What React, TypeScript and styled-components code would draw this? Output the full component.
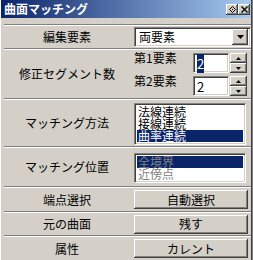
import React from 'react';
import styled, { createGlobalStyle } from 'styled-components';

const GlobalStyle = createGlobalStyle`
  html, body {
    margin: 0;
    padding: 0;
    background: #d4d0c8;
  }
  body {
    font-family: "Noto Sans CJK JP", "Noto Sans", sans-serif;
    font-size: 12px;
    color: #000;
  }
`;

const Window = styled.div`
  width: 253px;
  height: 260px;
  box-sizing: border-box;
  background: #d4d0c8;
  border-left: 1px solid #ffffff;
  border-right: 1px solid #808080;
  box-shadow: inset -1px 0 #404040;
  display: flex;
  flex-direction: column;
  overflow: hidden;
`;

const TitleBar = styled.div`
  height: 18px;
  margin-right: 1px;
  display: flex;
  align-items: center;
  padding: 0 1px 0 3px;
  background: linear-gradient(to right, #0a246a, #a6caf0);
  color: #fff;
  font-weight: bold;
  font-size: 12px;
  flex-shrink: 0;
`;

const TitleText = styled.span`
  flex: 1;
  line-height: 14px;
`;

const TitleButton = styled.div`
  width: 12px;
  height: 11px;
  box-sizing: border-box;
  background: #d4d0c8;
  box-shadow: inset -1px -1px #404040, inset 1px 1px #ffffff,
    inset -2px -2px #808080;
  display: flex;
  align-items: center;
  justify-content: center;
`;

const Body = styled.div`
  padding: 6px 1px 0 3px;
  display: flex;
  flex-direction: column;
`;

const Separator = styled.div`
  height: 2px;
  box-sizing: border-box;
  border-top: 1px solid #808080;
  border-bottom: 1px solid #ffffff;
`;

const Row = styled.div<{ $h: number; $align?: string }>`
  height: ${(p) => p.$h}px;
  display: grid;
  grid-template-columns: 126px 1fr;
  align-items: ${(p) => p.$align || 'center'};
`;

const Label = styled.div`
  text-align: center;
  align-self: center;
  line-height: 14px;
`;

const Control = styled.div`
  padding: 0 0 0 4px;
`;

const sunken = `
  border: 1px solid;
  border-color: #808080 #ffffff #ffffff #808080;
  box-shadow: inset 1px 1px #404040, inset -1px -1px #d4d0c8;
  background: #fff;
  box-sizing: border-box;
`;

const raised = `
  background: #d4d0c8;
  box-sizing: border-box;
  box-shadow: inset -1px -1px #404040, inset 1px 1px #ffffff,
    inset -2px -2px #808080;
`;

const Combo = styled.div`
  ${sunken};
  height: 20px;
  margin-top: 1px;
  display: flex;
  align-items: center;
  padding: 2px 2px 2px 4px;
`;

const ComboText = styled.span`
  flex: 1;
  line-height: 14px;
`;

const DropButton = styled.div`
  ${raised};
  width: 16px;
  height: 16px;
  display: flex;
  align-items: center;
  justify-content: center;
`;

const SpinGroup = styled.div`
  display: flex;
  flex-direction: column;
  gap: 3px;
  padding: 3px 0 0 4px;
`;

const SpinLine = styled.div`
  display: flex;
  height: 20px;
`;

const SpinLabel = styled.span`
  width: 59px;
  line-height: 12px;
  margin-top: -1px;
`;

const EditBox = styled.div`
  ${sunken};
  width: 36px;
  height: 20px;
  padding: 2px 0 0 3px;
  line-height: 15px;
  font-size: 13px;
`;

const Selected = styled.span`
  background: #0a246a;
  color: #fff;
`;

const SpinButtons = styled.div`
  display: flex;
  flex-direction: column;
  width: 17px;
  margin-left: 1px;
`;

const SpinButton = styled.div`
  ${raised};
  height: 10px;
  display: flex;
  align-items: center;
  justify-content: center;
`;

const ListBox = styled.div<{ $mt: number }>`
  ${sunken};
  width: 112px;
  margin-top: ${(p) => p.$mt}px;
  padding: 2px;
`;

const ListItem = styled.div<{ $selected?: boolean; $disabled?: boolean }>`
  height: 12px;
  line-height: 12px;
  padding-left: 1px;
  white-space: nowrap;
  background: ${(p) => (p.$selected ? '#0a246a' : 'transparent')};
  color: ${(p) =>
    p.$disabled ? '#808080' : p.$selected ? '#ffffff' : '#000000'};
`;

const PushButton = styled.div`
  ${raised};
  height: 19px;
  width: 114px;
  display: flex;
  align-items: center;
  justify-content: center;
  line-height: 14px;
`;

const Triangle = ({ dir, w }: { dir: 'up' | 'down'; w: number }) => {
  const h = Math.ceil(w / 2);
  const pts =
    dir === 'down' ? `0,0 ${w},0 ${w / 2},${h}` : `0,${h} ${w},${h} ${w / 2},0`;
  return (
    <svg width={w} height={h} viewBox={`0 0 ${w} ${h}`}>
      <polygon points={pts} fill="#000" />
    </svg>
  );
};

const PinIcon = () => (
  <svg width="7" height="7" viewBox="0 0 7 7">
    <polygon points="3.5,0.5 6.5,3.5 3.5,6.5 0.5,3.5" fill="none" stroke="#000" strokeWidth="1" />
    <rect x="3" y="3" width="1" height="1" fill="#000" />
  </svg>
);

const CloseIcon = () => (
  <svg width="7" height="7" viewBox="0 0 7 7">
    <path d="M0.5 0.5 L6.5 6.5 M6.5 0.5 L0.5 6.5" stroke="#000" strokeWidth="1.3" />
  </svg>
);

const Spinner = ({ value, selected }: { value: string; selected?: boolean }) => (
  <>
    <EditBox>{selected ? <Selected>{value}</Selected> : value}</EditBox>
    <SpinButtons>
      <SpinButton>
        <Triangle dir="up" w={5} />
      </SpinButton>
      <SpinButton>
        <Triangle dir="down" w={5} />
      </SpinButton>
    </SpinButtons>
  </>
);

export default function App() {
  return (
    <>
      <GlobalStyle />
      <Window>
        <TitleBar>
          <TitleText>曲面マッチング</TitleText>
          <TitleButton>
            <PinIcon />
          </TitleButton>
          <TitleButton>
            <CloseIcon />
          </TitleButton>
        </TitleBar>
        <Body>
          <Separator />
          <Row $h={22} $align="start">
            <Label>編集要素</Label>
            <Control>
              <Combo>
                <ComboText>両要素</ComboText>
                <DropButton>
                  <Triangle dir="down" w={7} />
                </DropButton>
              </Combo>
            </Control>
          </Row>
          <Separator />
          <Row $h={48} $align="start">
            <Label>修正セグメント数</Label>
            <SpinGroup>
              <SpinLine>
                <SpinLabel>第1要素</SpinLabel>
                <Spinner value="2" selected />
              </SpinLine>
              <SpinLine>
                <SpinLabel>第2要素</SpinLabel>
                <Spinner value="2" />
              </SpinLine>
            </SpinGroup>
          </Row>
          <Separator />
          <Row $h={46} $align="start">
            <Label>マッチング方法</Label>
            <Control>
              <ListBox $mt={3}>
                <ListItem>法線連続</ListItem>
                <ListItem>接線連続</ListItem>
                <ListItem $selected>曲率連続</ListItem>
              </ListBox>
            </Control>
          </Row>
          <Separator />
          <Row $h={38} $align="start">
            <Label>マッチング位置</Label>
            <Control>
              <ListBox $mt={5}>
                <ListItem $selected $disabled>
                  全境界
                </ListItem>
                <ListItem $disabled>近傍点</ListItem>
              </ListBox>
            </Control>
          </Row>
          <Separator />
          <Row $h={23}>
            <Label>端点選択</Label>
            <Control>
              <PushButton>自動選択</PushButton>
            </Control>
          </Row>
          <Separator />
          <Row $h={22}>
            <Label>元の曲面</Label>
            <Control>
              <PushButton>残す</PushButton>
            </Control>
          </Row>
          <Separator />
          <Row $h={23}>
            <Label>属性</Label>
            <Control>
              <PushButton>カレント</PushButton>
            </Control>
          </Row>
        </Body>
      </Window>
    </>
  );
}
